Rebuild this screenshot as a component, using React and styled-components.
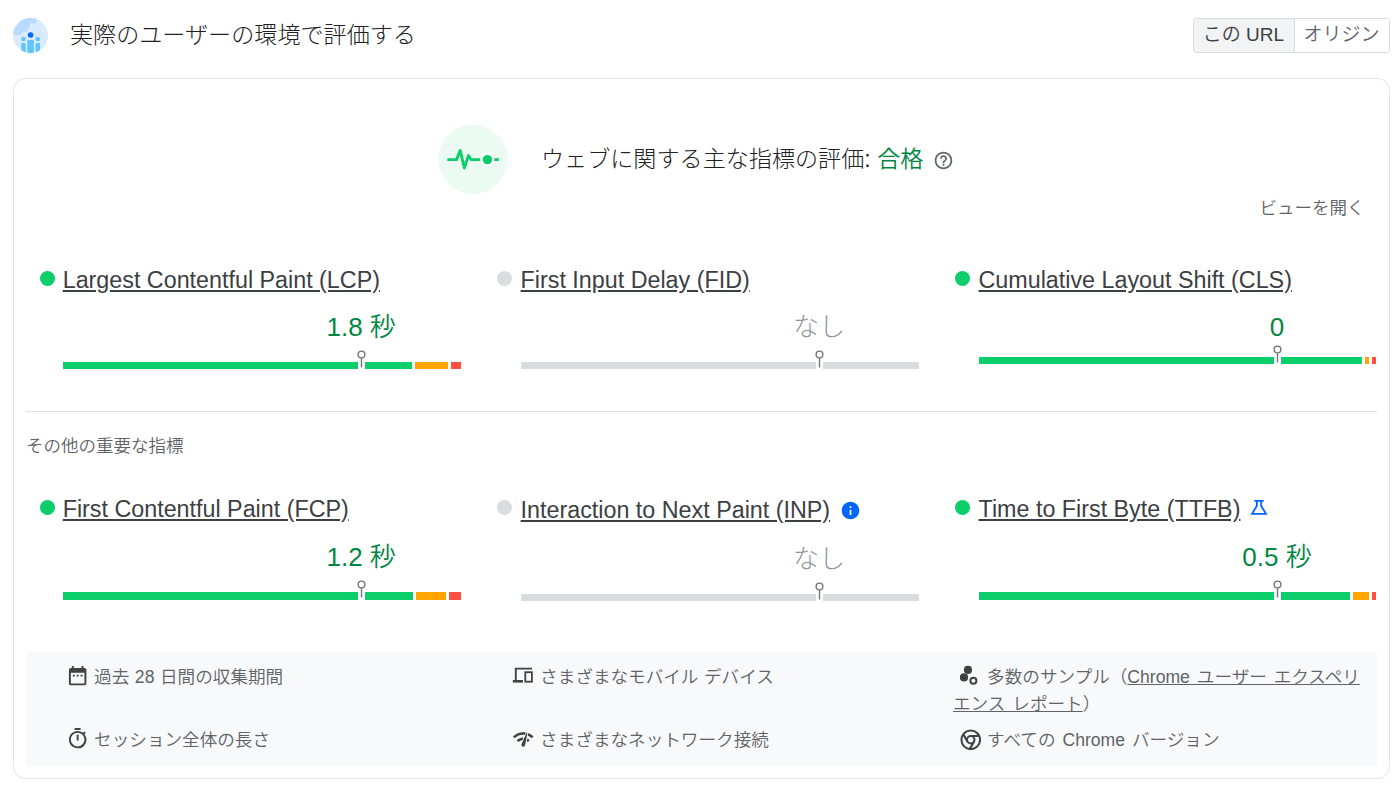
import React from 'react'
import styled, { createGlobalStyle } from 'styled-components'
import { MdDateRange, MdHelpOutline, MdInfo, MdNetworkCheck, MdOutlineTimer } from 'react-icons/md'

const GlobalStyle = createGlobalStyle`
  * {
    box-sizing: border-box;
  }

  body {
    margin: 0;
    background: #fff;
    color: #3c4043;
    font-family: "Liberation Sans", "Noto Sans CJK JP", sans-serif;
    font-weight: 350;
  }
`;

const coreMetrics = [
  { name: 'Largest Contentful Paint (LCP)', value: '1.8 秒', parts: [349, 33, 10] },
  { name: 'First Input Delay (FID)', value: 'なし', empty: true },
  { name: 'Cumulative Layout Shift (CLS)', value: '0', parts: [384, 4, 5], valueHeight: 62, valueGap: 13 },
]

const otherMetrics = [
  { name: 'First Contentful Paint (FCP)', value: '1.2 秒', parts: [351, 30, 12], valueHeight: 68, barHeight: 8 },
  { name: 'Interaction to Next Paint (INP)', value: 'なし', empty: true, icon: 'info', nameOffset: 1, valueHeight: 69 },
  { name: 'Time to First Byte (TTFB)', value: '0.5 秒', parts: [372, 16, 5], valueHeight: 68, barHeight: 8, icon: 'flask' },
]

const PeopleIcon = () => (
  <svg width="35" height="35" viewBox="0 0 35 35">
    <defs>
      <clipPath id="globe"><circle cx="17.5" cy="17.5" r="17.5" /></clipPath>
    </defs>
    <g clipPath="url(#globe)">
      <rect width="35" height="35" fill="#dbebff" />
      <path d="M0 0H22L24 2.5L22.5 5.5H17V8.5L15 10.5V13.5L10 14L7 17H2L0 15Z" fill="#b8dafe" />
      <g fill="#5fc6ff">
        <circle cx="10.4" cy="21" r="2.3" />
        <circle cx="24.7" cy="21" r="2.3" />
        <rect x="8.2" y="25" width="4.5" height="10" rx="1" />
        <rect x="14.3" y="22" width="6.6" height="13" rx="1" />
        <rect x="22.6" y="25" width="4.5" height="10" rx="1" />
      </g>
      <circle cx="17.6" cy="17" r="2.8" fill="#06f" />
    </g>
  </svg>
)

const PulseIcon = () => (
  <svg width="70" height="70" viewBox="0 0 70 70">
    <circle cx="35" cy="34.5" r="34.7" fill="#ebfbf3" />
    <path d="M9.3 34.6H18.6L22.2 25.4L26.3 43L30.5 30.5L33 34.6H42.5" fill="none" stroke="#0cce6b" strokeWidth="2.9" strokeLinejoin="round" />
    <path d="M56 34.6H60.8" stroke="#0cce6b" strokeWidth="2.9" />
    <circle cx="49.4" cy="34.6" r="7" fill="#fff" />
    <circle cx="49.4" cy="34.6" r="4.7" fill="#0cce6b" />
  </svg>
)

const PinIcon = () => (
  <svg width="9" height="18" viewBox="0 0 9 18">
    <circle cx="4.5" cy="4.5" r="3.4" fill="#fff" stroke="#757575" strokeWidth="1.4" />
    <path d="M4.5 8V17.5" stroke="#757575" strokeWidth="1.4" />
  </svg>
)

const FlaskIcon = () => (
  <svg width="18" height="21" viewBox="0 0 18 21" fill="none" stroke="#06f" strokeWidth="1.8">
    <path d="M4.3 1.8H13.7M6.8 2V7L2 14.8H16L11.2 7V2" />
  </svg>
)

const DevicesIcon = () => (
  <svg width="22" height="22" viewBox="0 0 22 22" fill="none" stroke="currentColor">
    <path d="M3.8 16V3.6H20" strokeWidth="1.9" />
    <path d="M.8 16.3H11" strokeWidth="2.6" />
    <rect x="13.3" y="7.2" width="6.6" height="9.5" strokeWidth="1.8" />
  </svg>
)

const SamplesIcon = () => (
  <svg width="22" height="22" viewBox="0 0 22 22" fill="currentColor">
    <circle cx="9" cy="4.9" r="4.1" />
    <circle cx="5" cy="12.4" r="4.1" />
    <circle cx="14.4" cy="15.7" r="3" fill="none" stroke="currentColor" strokeWidth="2" />
  </svg>
)

const ChromeIcon = () => (
  <svg width="22.4" height="22.4" viewBox="0 0 24 24" fill="none" stroke="currentColor" strokeWidth="2.2">
    <circle cx="12.6" cy="12.6" r="10" />
    <circle cx="12.6" cy="12.6" r="4" />
    <path d="M21.8 8.6H12.6M4.6 6.7L9.1 14.6M11.5 22.5L16.1 14.6" />
  </svg>
)

const Metric = ({ name, value, parts, empty, icon, nameOffset, valueHeight, valueGap, barHeight }) => (
  <MetricWrapper>
    <Dot $empty={empty} />
    <MetricBody>
      <NameRow $offset={nameOffset}>
        <MetricName href="#">{name}</MetricName>
        {icon === 'info' && <MdInfo size={21} color="#06f" />}
        {icon === 'flask' && <FlaskIcon />}
      </NameRow>
      <ValueRow $height={valueHeight} $gap={valueGap}>
        <Value $empty={empty}>{value}</Value>
      </ValueRow>
      <Bar $height={barHeight}>
        {empty ? <Part $color="#dadce0" style={{ flexGrow: 1 }} /> : (
          <>
            <Part $color="#0cce6b" style={{ flexGrow: parts[0] }} />
            <Part $color="#ffa400" style={{ flexGrow: parts[1] }} />
            <Part $color="#ff4e42" style={{ flexGrow: parts[2] }} />
          </>
        )}
        <Pin><PinIcon /></Pin>
      </Bar>
    </MetricBody>
  </MetricWrapper>
)

const App = () => {
  return (
    <Page>
      <GlobalStyle />
      <Header>
        <PeopleIcon />
        <Title>実際のユーザーの環境で評価する</Title>
        <Toggle>
          <ToggleButton $active>この URL</ToggleButton>
          <ToggleButton>オリジン</ToggleButton>
        </Toggle>
      </Header>
      <Panel>
        <Assessment>
          <PulseIcon />
          <AssessmentText>
            ウェブに関する主な指標の評価: <Passed>合格</Passed>
          </AssessmentText>
          <MdHelpOutline size={21} color="#5f6368" />
        </Assessment>
        <ExpandRow>ビューを開く</ExpandRow>
        <Metrics>
          {coreMetrics.map((metric) => <Metric key={metric.name} {...metric} />)}
        </Metrics>
        <OtherTitle>その他の重要な指標</OtherTitle>
        <Metrics $second>
          {otherMetrics.map((metric) => <Metric key={metric.name} {...metric} />)}
        </Metrics>
        <Footer>
          <FooterItem><IconBox><MdDateRange size={23.3} /></IconBox>過去 28 日間の収集期間</FooterItem>
          <FooterItem><IconBox><DevicesIcon /></IconBox>さまざまなモバイル デバイス</FooterItem>
          <FooterItem $spaced>
            <IconBox><SamplesIcon /></IconBox>多数のサンプル（<ReportLink href="#">Chrome ユーザー エクスペリエンス レポート</ReportLink>）
          </FooterItem>
          <FooterItem><IconBox><MdOutlineTimer size={23.3} /></IconBox>セッション全体の長さ</FooterItem>
          <FooterItem><IconBox><MdNetworkCheck size={22.5} /></IconBox>さまざまなネットワーク接続</FooterItem>
          <FooterItem $spaced><IconBox><ChromeIcon /></IconBox>すべての Chrome バージョン</FooterItem>
        </Footer>
      </Panel>
    </Page>
  );
}

export default App

const Page = styled.main`
  width: 1400px;
  height: 789px;
  padding: 18px 10px 0 13px;
  overflow: hidden;

  svg {
    display: block;
    flex: none;
  }
`;

const Header = styled.header`
  display: flex;
  align-items: center;
  height: 35px;
`;

const Title = styled.h1`
  flex: 1;
  margin: 0 0 2px 22px;
  font-size: 23.1px;
  font-weight: 300;
  line-height: 34px;
  color: #212121;
`;

const Toggle = styled.div`
  display: flex;
  height: 35px;
  border: 1px solid #dadce0;
  border-radius: 3px;
  overflow: hidden;
`;

const ToggleButton = styled.button`
  width: ${({ $active }) => ($active ? '101px' : '94px')};
  padding: 0 1px 6px 0;
  border: 0;
  border-right: ${({ $active }) => ($active ? '1px solid #dadce0' : '0')};
  background: ${({ $active }) => ($active ? '#f1f3f4' : '#fff')};
  color: ${({ $active }) => ($active ? '#3c4043' : '#5f6368')};
  font: inherit;
  font-size: 19px;
  white-space: nowrap;
`;

const Panel = styled.section`
  height: 701px;
  margin-top: 25px;
  padding: 46px 12px 0;
  border: 1px solid #e4e4e4;
  border-radius: 12px;
`;

const Assessment = styled.div`
  display: flex;
  align-items: center;
  height: 70px;
  padding-left: 412px;
`;

const AssessmentText = styled.h2`
  margin: 0 10px 2px 33px;
  font-size: 23.1px;
  font-weight: 300;
  line-height: 34px;
  color: #212121;
  white-space: nowrap;
`;

const Passed = styled.span`
  color: #018642;
  font-weight: 350;
`;

const ExpandRow = styled.div`
  padding-right: 12.5px;
  font-size: 17.5px;
  line-height: 26px;
  text-align: right;
  color: #5f6368;
`;

const Metrics = styled.div`
  display: grid;
  grid-template-columns: repeat(3, 1fr);
  column-gap: 23.3px;
  height: ${({ $second }) => ($second ? '158px' : '146px')};
  margin-top: ${({ $second }) => ($second ? '35px' : '44px')};
  padding-right: 0.5px;
`;

const MetricWrapper = styled.div`
  display: flex;
  padding-left: 13.5px;
`;

const Dot = styled.span`
  width: 15px;
  height: 15px;
  margin: 6px 8.2px 0 0;
  border-radius: 50%;
  background: ${({ $empty }) => ($empty ? '#dadce0' : '#0cce6b')};
`;

const MetricBody = styled.div`
  flex: 1;
`;

const NameRow = styled.div`
  display: flex;
  align-items: center;
  gap: 10px;
  height: ${({ $offset = 0 }) => 30 + $offset}px;
  padding-top: ${({ $offset = 0 }) => $offset}px;
`;

const MetricName = styled.a`
  font-size: 23.3px;
  line-height: 28px;
  color: #3c4043;
  white-space: nowrap;
`;

const ValueRow = styled.div`
  display: flex;
  align-items: flex-end;
  justify-content: center;
  height: ${({ $height = 67 }) => $height}px;
  padding: 0 0 ${({ $gap = 18 }) => $gap}px 199px;
`;

const Value = styled.span`
  font-size: 26px;
  font-weight: ${({ $empty }) => ($empty ? 300 : 350)};
  line-height: 34px;
  color: ${({ $empty }) => ($empty ? '#8f959b' : '#018642')};
  white-space: nowrap;
`;

const Bar = styled.div`
  position: relative;
  display: flex;
  gap: 3px;
  height: ${({ $height = 7 }) => $height}px;
`;

const Part = styled.span`
  flex-basis: 0;
  background: ${({ $color }) => $color};
`;

// marks the 75th percentile on top of the distribution bar
const Pin = styled.span`
  position: absolute;
  left: 75%;
  bottom: 0;
  display: flex;
  justify-content: center;
  width: 7px;
  height: 100%;
  margin-left: -3.4px;
  background: #fff;

  svg {
    margin-top: -12px;
  }
`;

const OtherTitle = styled.h3`
  margin: 0;
  padding-top: 21px;
  border-top: 1px solid #e0e0e0;
  font-size: 17.5px;
  font-weight: 350;
  line-height: 26px;
  color: #5f6368;
`;

const Footer = styled.div`
  display: grid;
  grid-template-columns: 412px 413px 415px;
  grid-template-rows: 63px 27px;
  column-gap: 34px;
  height: 115px;
  padding: 12px 0 0 34px;
  border-radius: 4px;
  background: #f8f9fb;
`;

const FooterItem = styled.div`
  font-size: 17.6px;
  line-height: 26.5px;
  word-spacing: ${({ $spaced }) => ($spaced ? '2px' : '0.7px')};
  color: #5f6368;
`;

const IconBox = styled.span`
  display: inline-flex;
  justify-content: center;
  width: 23.3px;
  height: 23.3px;
  margin: 0 5.3px 0 5.5px;
  vertical-align: -4px;
  color: #424242;
`;

const ReportLink = styled.a`
  color: inherit;
`;
